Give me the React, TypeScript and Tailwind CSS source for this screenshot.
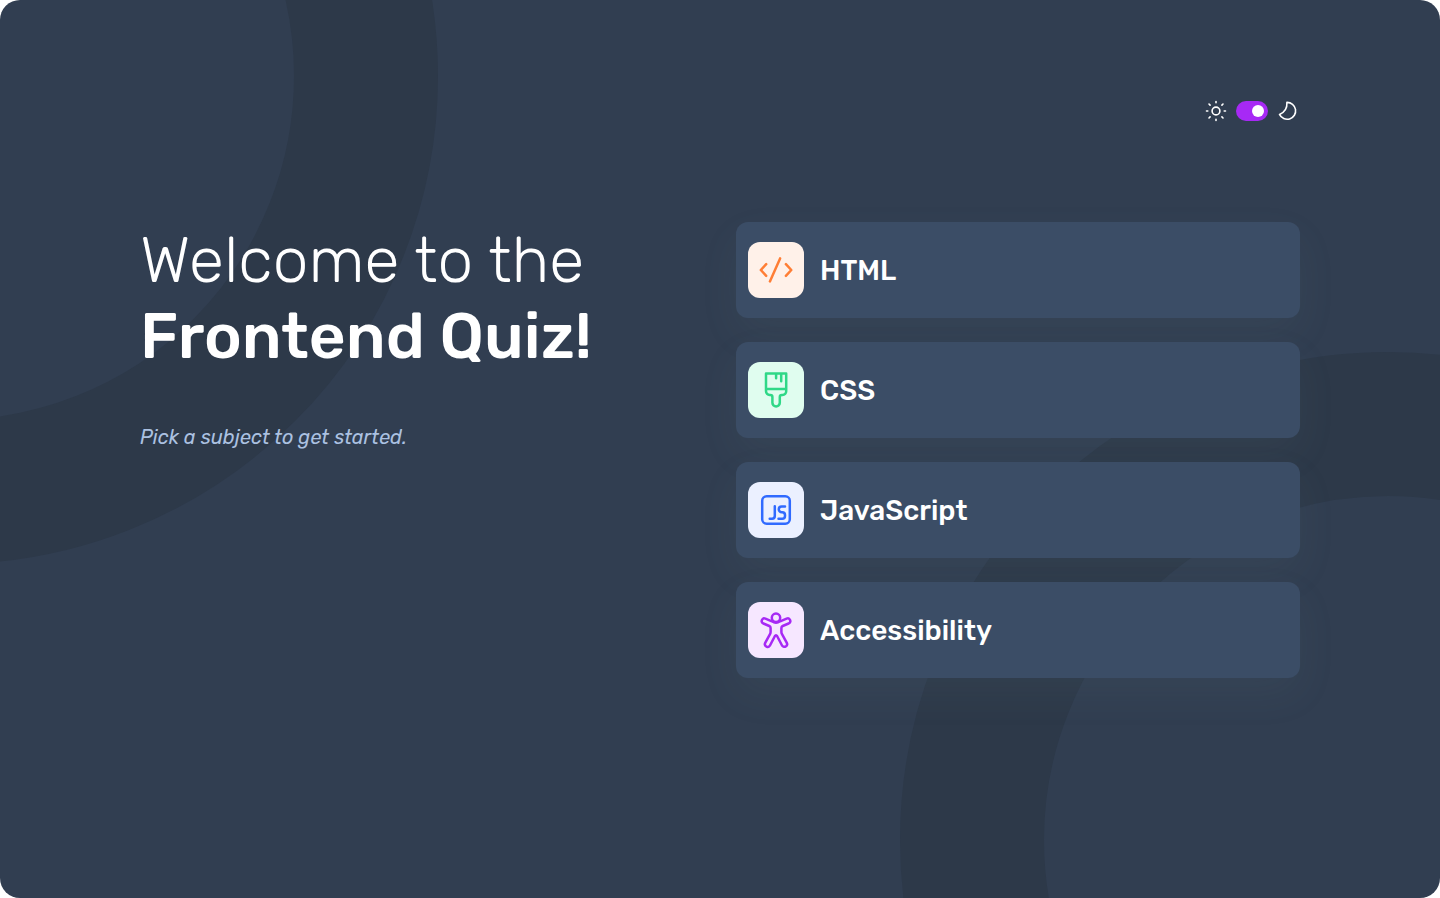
import type { ReactNode } from "react";

type Subject = { name: string; tile: string; icon: ReactNode };

const subjects: Subject[] = [
  {
    name: "HTML",
    tile: "bg-[#fff1e9] text-[#ff7e35]",
    icon: (
      <path d="M18.2 22.2 12.8 28l5.4 5.8M32.1 16.4 21.9 39.4M37.9 22.2l5.4 5.8-5.4 5.8" />
    ),
  },
  {
    name: "CSS",
    tile: "bg-[#e0fdef] text-[#2fd887]",
    icon: (
      <path d="M18 11.5h20.2v17.8a3.6 3.6 0 0 1-3.6 3.6h-.8a2 2 0 0 0-2 2v5.9a3.7 3.7 0 0 1-7.4 0v-5.9a2 2 0 0 0-2-2h-.8a3.6 3.6 0 0 1-3.6-3.6ZM18 26.9h20.2M28.1 11.5v4.7M33.2 11.5v7.8" />
    ),
  },
  {
    name: "JavaScript",
    tile: "bg-[#ebf0ff] text-[#306aff]",
    icon: (
      <>
        <rect x="14.2" y="14.2" width="27.6" height="27.6" rx="4.5" />
        <path d="M26.8 24.2v9.8a2.7 2.7 0 0 1-2.7 2.7h-2.4M37 24.4h-3.4a2.8 2.8 0 0 0-2.8 2.8v.3a2.8 2.8 0 0 0 2.8 2.8h.6a2.8 2.8 0 0 1 2.8 2.8v.8a2.8 2.8 0 0 1-2.8 2.8h-3.7" />
      </>
    ),
  },
  {
    name: "Accessibility",
    tile: "bg-[#f6e7ff] text-[#a729f5]",
    icon: (
      <>
        <circle cx="28" cy="15.8" r="4.2" />
        <path d="M17.4 16.6a2.6 2.6 0 0 0-2 4.9l5.9 2.5q1.3.6 1.3 1.9v4q0 1.200-.600 2.300l-4.800 8.700a2.700 2.700 0 0 0 4.900 2.400l4.700-9.100q1.200-1.900 2.400 0l4.700 9.100a2.700 2.700 0 0 0 4.900-2.400l-4.800-8.700q-.600-1.100-.600-2.300v-4q0-1.300 1.300-1.900l5.900-2.500a2.600 2.600 0 0 0-2-4.900l-6.500 2.700Q28 22 23.900 19.300Z" />
      </>
    ),
  },
];

function Backdrop() {
  return (
    <svg
      className="pointer-events-none absolute inset-0 size-full"
      viewBox="0 0 1440 898"
      fill="none"
      stroke="#2d3949"
      strokeWidth="144"
      aria-hidden="true"
    >
      <circle cx="-50" cy="76" r="416" />
      <circle cx="1388" cy="840" r="416" />
    </svg>
  );
}

function ThemeSwitch() {
  return (
    <div className="flex h-6 items-center justify-end gap-2 text-white">
      <svg className="size-6" viewBox="0 0 24 24" fill="none" stroke="currentColor" strokeWidth="1.6" strokeLinecap="round">
        <circle cx="12" cy="12" r="3.9" />
        <path d="M12 2.500v1.300M12 20.200v1.300M2.500 12h1.300M20.200 12h1.300M5 5l1.100 1.100M17.900 17.900l1.100 1.100M5 19l1.100-1.100M17.900 6.100l1.100-1.100" />
      </svg>
      <button type="button" role="switch" aria-checked="true" className="flex h-5 w-8 items-center justify-end rounded-full bg-[#a729f5] p-1">
        <span className="size-3 rounded-full bg-white" />
      </button>
      <svg className="size-6" viewBox="0 0 24 24" fill="none" stroke="currentColor" strokeWidth="1.6" strokeLinejoin="round">
        <path d="M10.9 3.4c.4 5.8-1.8 9.8-7.4 12a8.45 8.45 0 1 0 7.4-12Z" />
      </svg>
    </div>
  );
}

function SubjectCard({ subject }: { subject: Subject }) {
  return (
    <button
      type="button"
      className="flex h-24 w-full items-center gap-4 rounded-xl bg-[#3b4d66] px-3 text-left shadow-[0_16px_40px_rgba(130,160,160,0.07)]"
    >
      <span className={`flex size-14 shrink-0 rounded-xl ${subject.tile}`}>
        <svg className="size-14" viewBox="0 0 56 56" fill="none" stroke="currentColor" strokeWidth="2.5" strokeLinecap="round" strokeLinejoin="round">
          {subject.icon}
        </svg>
      </span>
      <span className="pt-0.5 text-[28px] leading-7 font-medium whitespace-nowrap text-white">
        {subject.name}
      </span>
    </button>
  );
}

export default function App() {
  return (
    <div className="bg-white font-['Rubik','Roboto',sans-serif]">
      <div className="relative h-[898px] w-[1440px] overflow-hidden rounded-[20px] bg-[#313e51]">
        <Backdrop />
        <div className="relative px-[140px] pt-[99px]">
          <header>
            <ThemeSwitch />
          </header>
          <main className="mt-[99px] grid grid-cols-[564px_564px] gap-8">
            <section>
              <h1 className="text-[64px] leading-[76px] text-white">
                <span className="block w-fit font-light whitespace-nowrap">Welcome to the</span>
                <span className="block w-fit font-medium whitespace-nowrap">Frontend Quiz!</span>
              </h1>
              <p className="mt-12 w-fit text-[20px] leading-[30px] text-[#abc1e1] italic">
                Pick a subject to get started.
              </p>
            </section>
            <section className="flex flex-col gap-6">
              {subjects.map((subject) => (
                <SubjectCard key={subject.name} subject={subject} />
              ))}
            </section>
          </main>
        </div>
      </div>
    </div>
  );
}
